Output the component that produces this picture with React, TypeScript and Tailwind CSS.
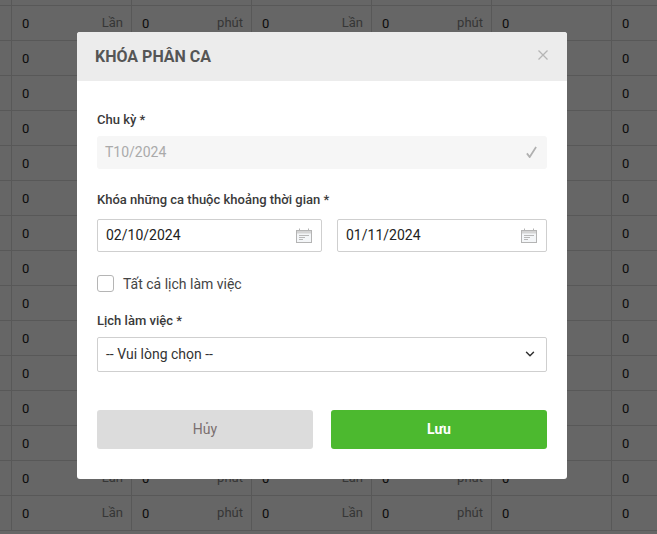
import { ChevronDown } from 'lucide-react'

const rows = Array.from({ length: 16 })

function BackgroundRow() {
  return (
    <div className="grid grid-cols-[11px_120px_120px_120px_120px_120px_46px] h-[35px] border-b border-[#dcdcdc] text-[13px]">
      <div />
      <Cell value="0" unit="Lần" />
      <Cell value="0" unit="phút" />
      <Cell value="0" unit="Lần" />
      <Cell value="0" unit="phút" />
      <Cell value="0" />
      <Cell value="0" />
    </div>
  )
}

function Cell({ value, unit }: { value: string; unit?: string }) {
  return (
    <div className="border-l border-[#dcdcdc] pl-[10px] pr-[8px] flex justify-between leading-[35px]">
      <span className="text-[#222]">{value}</span>
      {unit && <span className="text-[#888] -translate-y-px">{unit}</span>}
    </div>
  )
}

function CalendarIcon() {
  return (
    <svg width="16" height="15" viewBox="0 0 16 15" fill="none" className="shrink-0">
      <rect x="0.5" y="2.5" width="15" height="12" fill="#f4f6f8" stroke="#b4b4b4" />
      <rect x="1" y="3" width="14" height="2.5" fill="#d4d4d4" />
      <path d="M3.5 0.5v2M12.5 0.5v2" stroke="#b4b4b4" />
      <path d="M3 7.5h10M3 9.5h6M3 11.5h4" stroke="#b8b8b8" />
    </svg>
  )
}

function DateField({ value, className }: { value: string; className: string }) {
  return (
    <div className={`h-[33px] border border-[#cfcfcf] rounded-[2px] flex items-center justify-between pl-2 pr-[9px] text-[14px] text-[#222] ${className}`}>
      <span>{value}</span>
      <CalendarIcon />
    </div>
  )
}

export default function App() {
  return (
    <div className="relative w-[657px] h-[534px] overflow-hidden bg-white font-['Roboto',sans-serif]">
      <div className="-mt-[29px]">
        {rows.map((_, i) => (
          <BackgroundRow key={i} />
        ))}
      </div>

      <div className="absolute inset-0 bg-black/60 pt-8 pl-[77px]">
        <div className="w-[490px] h-[447px] bg-white rounded-[3px] overflow-hidden">
          <div className="h-[49px] bg-[#ececec] flex items-center justify-between pl-[18px] pr-[19px]">
            <h2 className="text-[16px] font-bold text-[#555]">KHÓA PHÂN CA</h2>
            <svg width="10" height="10" viewBox="0 0 10 10" className="-translate-y-[2px]" fill="none" stroke="#b5b5b5" strokeWidth="1.3">
              <path d="M0.5 0.5l9 9M9.5 0.5l-9 9" />
            </svg>
          </div>

          <div className="px-5 pt-[31px]">
            <label className="block text-[13px] font-medium text-[#3a3a3a] leading-[15px] mb-[9px]">Chu kỳ *</label>
            <div className="h-[33px] bg-[#f6f6f6] rounded-[3px] flex items-center justify-between pl-2 pr-[10px] text-[14px] text-[#aaa]">
              <span>T10/2024</span>
              <svg width="11" height="12" viewBox="0 0 12 13" fill="none" stroke="#b0b0b0" strokeWidth="1.9" className="-translate-y-px">
                <path d="M1 8l3 4L11 1" />
              </svg>
            </div>

            <label className="block text-[13px] font-medium text-[#3a3a3a] leading-[15px] mt-[23px] mb-[12px]">
              Khóa những ca thuộc khoảng thời gian *
            </label>
            <div className="flex gap-[15px]">
              <DateField value="02/10/2024" className="w-[225px]" />
              <DateField value="01/11/2024" className="w-[210px]" />
            </div>

            <div className="flex items-center mt-[23px] h-[17px]">
              <div className="w-[17px] h-[17px] border border-[#b5b5b5] rounded-[3px]" />
              <span className="ml-[9px] text-[14px] text-[#444] translate-y-px">Tất cả lịch làm việc</span>
            </div>

            <label className="block text-[13px] font-medium text-[#3a3a3a] leading-[15px] mt-[21px] mb-[9px]">Lịch làm việc *</label>
            <div className="h-[35px] border border-[#cfcfcf] rounded-[2px] flex items-center justify-between pl-2 pr-[9px] text-[14px] text-[#333]">
              <span>-- Vui lòng chọn --</span>
              <ChevronDown size={14} strokeWidth={2.5} className="text-[#333] -translate-y-px" />
            </div>

            <div className="flex justify-between mt-[38px]">
              <button className="w-[216px] h-[39px] rounded-[3px] bg-[#dcdcdc] text-[14px] text-[#7a6f6f]">Hủy</button>
              <button className="w-[216px] h-[39px] rounded-[3px] bg-[#4cb92f] text-[14px] font-bold text-white">Lưu</button>
            </div>
          </div>
        </div>
      </div>
    </div>
  )
}
